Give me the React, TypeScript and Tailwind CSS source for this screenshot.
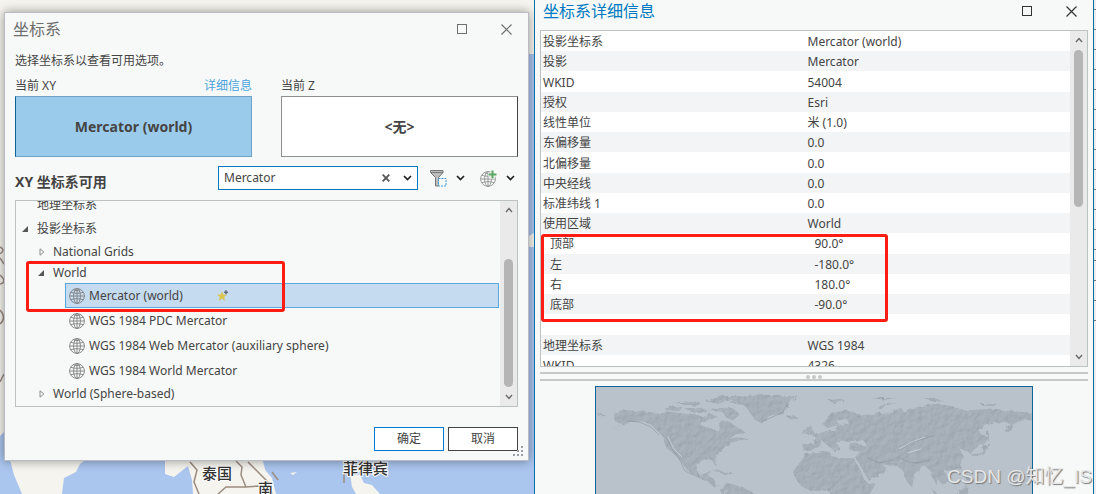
import React from 'react';

interface DetailRow {
  label: string;
  value: string;
  indent?: boolean;
}

const details: DetailRow[] = [
  { label: '投影坐标系', value: 'Mercator (world)' },
  { label: '投影', value: 'Mercator' },
  { label: 'WKID', value: '54004' },
  { label: '授权', value: 'Esri' },
  { label: '线性单位', value: '米 (1.0)' },
  { label: '东偏移量', value: '0.0' },
  { label: '北偏移量', value: '0.0' },
  { label: '中央经线', value: '0.0' },
  { label: '标准纬线 1', value: '0.0' },
  { label: '使用区域', value: 'World' },
  { label: '顶部', value: '90.0°', indent: true },
  { label: '左', value: '-180.0°', indent: true },
  { label: '右', value: '180.0°', indent: true },
  { label: '底部', value: '-90.0°', indent: true },
  { label: '', value: '' },
  { label: '地理坐标系', value: 'WGS 1984' },
  { label: 'WKID', value: '4326' },
];

const systems = [
  'Mercator (world)',
  'WGS 1984 PDC Mercator',
  'WGS 1984 Web Mercator (auxiliary sphere)',
  'WGS 1984 World Mercator',
];

const GlobeLines = () => (
  <g fill="none" stroke="#808080" strokeWidth=".9">
    <circle cx="8" cy="8" r="7.4" />
    <ellipse cx="8" cy="8" rx="3.4" ry="7.4" />
    <path d="M8 .6v14.8M.6 8h14.8M1.8 4.3c3.6 1.3 8.8 1.3 12.4 0M1.8 11.7c3.6-1.3 8.8-1.3 12.4 0M4.5 1.8c2 1 5 1 7 0" />
  </g>
);

const GlobeIcon = () => (
  <svg className="h-4 w-4 shrink-0" viewBox="0 0 16 16">
    <GlobeLines />
  </svg>
);

const AddGlobeIcon = () => (
  <svg className="h-[17px] w-[17px]" viewBox="0 0 17 17">
    <g transform="translate(0 1)" opacity=".85">
      <GlobeLines />
    </g>
    <path d="M12.5 0v9M8 4.5h9" stroke="#f7f9f8" strokeWidth="4" />
    <path d="M12.5 .5v8M8.5 4.5h8" stroke="#5aa55f" strokeWidth="2" />
  </svg>
);

const FilterIcon = () => (
  <svg className="h-[17px] w-[17px]" viewBox="0 0 17 17">
    <path d="M.5 .5h12.500v2L8.500 7.500v8.500h-3V7.500L.5 2.500z" fill="#bdbdbd" stroke="#777" />
    <path d="M1 2.500h12" stroke="#777" />
    <rect x="8.500" y="8.500" width="7.500" height="7.500" fill="#f7f9f8" stroke="#3d9bd5" strokeDasharray="2 1" />
  </svg>
);

const StarIcon = () => (
  <svg className="h-3 w-3" viewBox="0 0 12 12">
    <path d="M5 1.200l1.300 3.300 3.700.2-2.900 2.300 1 3.700L5 8.700l-3.200 2 1-3.700L0 4.700l3.700-.2z" fill="#dcc650" />
    <path d="M9 .3v4M7 2.300h4" stroke="#68717c" strokeWidth="1.600" />
  </svg>
);

const Chevron = () => (
  <svg className="h-[6px] w-[9px]" viewBox="0 0 9 6">
    <path d="M1 1l3.500 3.500L8 1" fill="none" stroke="#222" strokeWidth="1.700" />
  </svg>
);

const OpenArrow = () => (
  <svg className="h-[6px] w-[6px]" viewBox="0 0 6 6">
    <path d="M6 0v6H0z" fill="#555" />
  </svg>
);

const ClosedArrow = () => (
  <svg className="h-2 w-[6px]" viewBox="0 0 6 8">
    <path d="M1 .8v6.400L4.800 4z" fill="none" stroke="#8a8a8a" />
  </svg>
);

const WindowButtons: React.FC<{ color: string }> = ({ color }) => (
  <div className="flex gap-[33px] pr-4">
    <button aria-label="最大化" className={color}>
      <svg className="h-[11px] w-[11px]" viewBox="0 0 11 11">
        <rect x=".5" y=".5" width="9" height="9" fill="none" stroke="currentColor" />
      </svg>
    </button>
    <button aria-label="关闭" className={color}>
      <svg className="h-[11px] w-[11px]" viewBox="0 0 11 11">
        <path d="M.5 .5l10 10M10.500 .5l-10 10" stroke="currentColor" strokeWidth="1.200" />
      </svg>
    </button>
  </div>
);

const ScrollBar: React.FC<{ thumb: string }> = ({ thumb }) => (
  <div className="flex w-[17px] shrink-0 flex-col items-center bg-[#eaeaea] py-[6px]">
    <svg className="h-[6px] w-2 shrink-0" viewBox="0 0 8 6">
      <path d="M1 5l3-3.500L7 5" fill="none" stroke="#666" strokeWidth="1.300" />
    </svg>
    <div className={`w-[9px] rounded-full bg-[#b5b5b5] ${thumb}`} />
    <svg className="mt-auto h-[6px] w-2 shrink-0" viewBox="0 0 8 6">
      <path d="M1 1l3 3.500L7 1" fill="none" stroke="#666" strokeWidth="1.300" />
    </svg>
  </div>
);

const BaseMap = () => (
  <svg className="absolute inset-0 h-full w-full" viewBox="0 0 1096 494" preserveAspectRatio="xMinYMin slice">
    <rect width="1096" height="494" fill="#f5f4ee" />
    <path d="M0 436L4 432V460H10L14 475L22 494H0z" fill="#aac5ee" />
    <path d="M62 494L64 478L76 472L80 464L88 458H165V474L174 477L188 466L192 480L193 494z" fill="#aac5ee" />
    <path d="M261 458H540V54H526V458zM262 458H534V494H272z" fill="#aac5ee" />
    <path d="M529 236L534 233V247H529z" fill="#f5f4ee" />
    <path d="M265 470L272 478L276 494H262zM350 474L360 475L364 483L372 485L380 494H356L352 487zM290 473l7-1-4 3z" fill="#f5f4ee" />
    <g fill="none" stroke="#9c8c80" strokeWidth="1.500">
      <path d="M190 462l7 8-3 12 5 12M218 494l8-7h20l-5-12 1-8-6-6M246 487l12-1 6 4M248 462l12 12 10 10 2 10" />
      <path d="M0 247q6 3 0 7M0 258l4 6M0 275q8 7 0 9M0 310q7 8 0 14M0 382l4-8M344 474v9M272 472l6 8" />
    </g>
    <g className="font-['Noto_Sans_CJK_SC',sans-serif] text-[15px] font-medium" fill="#333" stroke="#fff" strokeWidth="2" paintOrder="stroke">
      <text x="202" y="479">泰国</text>
      <text x="258" y="494">南</text>
      <text x="343" y="474">菲律宾</text>
    </g>
  </svg>
);

const WorldPreview = () => (
  <svg className="block w-full" viewBox="0 0 437 218">
    <defs>
      {/* rough coast plus shaded relief over the land */}
      <filter id="relief" x="0" y="0" width="100%" height="100%" colorInterpolationFilters="sRGB">
        <feTurbulence type="fractalNoise" baseFrequency=".16" numOctaves="4" seed="7" result="noise" />
        <feDisplacementMap in="SourceGraphic" in2="noise" scale="4" result="land" />
        <feDiffuseLighting in="noise" surfaceScale="1.200" lightingColor="#ffffff" result="light">
          <feDistantLight azimuth="225" elevation="60" />
        </feDiffuseLighting>
        <feComposite in="light" in2="land" operator="in" result="shade" />
        <feComposite in="land" in2="shade" operator="arithmetic" k1=".25" k2=".79" />
      </filter>
    </defs>
    <rect width="437" height="218" fill="#b9c2ca" />
    <g filter="url(#relief)" fill="#a5aeb6">
      <rect width="437" height="218" fill="none" />
      <g transform="translate(-60 -16) scale(.3333)">
        <path d="M232 125L262 117L330 122L375 128L400 122L440 128L475 130L500 140L520 128L545 135L530 145L497 152L493 162L520 172L540 178L545 188L552 175L550 158L560 148L580 155L600 165L630 185L600 190L580 205L600 200L640 202L605 210L585 215L565 230L545 250L538 265L543 285L537 282L530 268L505 266L485 275L482 295L490 312L505 310L515 300L525 302L520 318L535 325L540 345L555 345L535 350L515 330L480 318L455 300L440 275L415 250L388 228L383 200L365 180L345 160L315 152L285 152L225 182L265 160L240 155L235 145z" />
        <path d="M380 112L400 105L440 108L430 120L395 118zM420 98L470 92L500 98L480 104zM445 112L500 110L520 120L480 128zM505 90L560 76L640 74L600 84L545 98zM550 108L590 112L612 130L590 150L570 138L560 122L520 118z" />
        <path d="M580 96L600 82L650 73L720 72L790 78L765 90L755 110L740 125L700 135L678 157L655 145L640 120L625 102L590 98z" />
        <path d="M560 390L556 360L572 336L590 340L620 350L650 365L660 400zM525 295L545 297L570 306L595 308L570 312zM750 138L768 133L788 140L768 146zM812 166L824 163L838 190L812 192zM802 178L812 176L810 188L800 188zM183 125L212 135L188 136z" />
      </g>
      <g transform="translate(225 -16) scale(.3333)">
        <path d="M5 158L40 125L75 118L105 125L85 140L70 140L50 150L55 162L30 168L20 172z" />
        <path d="M-52 220L-22 220L-15 200L-25 192L0 182L40 180L50 165L85 158L80 145L60 145L75 130L100 128L130 132L150 130L175 125L215 125L240 108L250 125L290 108L340 98L395 105L440 118L500 115L560 120L636 125V148L600 148L578 160L562 188L553 180L570 155L530 155L490 165L475 175L480 190L500 195L495 215L460 235L450 250L440 240L420 235L430 260L420 290L395 300L370 300L385 325L370 345L355 330L345 320L350 345L335 320L330 300L315 285L300 290L280 310L275 350L258 330L248 300L230 285L185 280L160 260L200 295L190 305L145 330L128 300L105 260L115 240L85 235L90 215L140 225L130 210L75 210L45 215L60 235L45 245L30 230L5 210L-10 225L-30 240L-52 240z" />
        <path d="M-45 250L-25 248L25 242L30 255L65 262L100 262L120 300L130 325L145 340L168 335L140 380L140 420L30 420L25 360L-30 360L-60 345L-80 315L-78 295L-55 265z" />
        <path d="M492 222L515 218L500 228L494 244L460 260L456 252L485 240zM500 180L505 180L506 210L500 210zM405 372L440 345L445 372L430 385zM330 348L370 390L350 385zM440 310L450 315L452 340L440 328zM175 115L190 100L235 95L200 102L185 118zM20 88L60 84L75 88L40 96zM150 81L230 82L190 86zM310 82L340 80L370 92L340 90zM480 100L530 98L520 106L490 105z" />
      </g>
    </g>
    <g fill="none" stroke="#858e98" strokeWidth="1" opacity=".5">
      <path d="M31 34l12 1 12 5 8 8M70 50l6 12 7 9 6 13 8 4M166 35l6-3 14-6 6-8" />
      <path d="M302 64l6-3 8-6 12-3 12-4M304 71l9 4 10 1 12-3M272 71l12 5 14-3" />
    </g>
    <path d="M72 50l6 12 8 8M304 62l12-7 14-5M312 66l14-4M131 103l-4 6" fill="none" stroke="#d4d9dd" strokeWidth="1" opacity=".7" />
  </svg>
);

const CoordinateDialog = () => (
  <section className="relative border border-[#b9bcc4] bg-[#f7f9f8] px-[10px] pb-[9px] shadow-[0_0_10px_rgba(0,0,0,0.4)]">
    <header className="-mx-[10px] flex h-8 items-center justify-between pl-2">
      <h1 className="text-base text-[#6e6e6e]">坐标系</h1>
      <WindowButtons color="text-[#6e6e6e]" />
    </header>
    <p className="h-[30px] leading-8">选择坐标系以查看可用选项。</p>

    <div className="flex gap-[29px]">
      <div className="flex-1">
        <div className="flex h-[21px] items-center justify-between">
          <span>当前 XY</span>
          <a href="#details" className="text-[#4ba3dc]">详细信息</a>
        </div>
        <button className="h-[61px] w-full border border-[#6fa3c7] border-l-[#0b6094] bg-[#9bcbeb] text-sm font-bold">
          Mercator (world)
        </button>
      </div>
      <div className="flex-1">
        <div className="flex h-[21px] items-center">当前 Z</div>
        <button className="h-[61px] w-full border border-[#8f8f8f] border-r-[#444] bg-white text-sm font-bold">
          &lt;无&gt;
        </button>
      </div>
    </div>

    <div className="mt-[9px] flex h-6 items-center">
      <h2 className="mt-2 text-sm font-bold">XY 坐标系可用</h2>
      <div className="ml-auto flex h-6 w-[200px] items-center border border-[#0079c1] bg-white pr-[5px]">
        <input aria-label="搜索" defaultValue="Mercator" className="w-0 flex-1 bg-transparent pl-[5px] outline-none" />
        <button aria-label="清除" className="mr-[13px]">
          <svg className="h-2 w-2" viewBox="0 0 8 8">
            <path d="M.7 .7l6.600 6.600M7.300 .7L.7 7.300" stroke="#555" strokeWidth="1.800" />
          </svg>
        </button>
        <button aria-label="搜索历史"><Chevron /></button>
      </div>
      <button aria-label="过滤器" className="ml-3 flex items-center gap-[9px]">
        <FilterIcon />
        <Chevron />
      </button>
      <button aria-label="添加坐标系" className="mr-[3px] ml-[15px] flex items-center gap-[9px]">
        <AddGlobeIcon />
        <Chevron />
      </button>
    </div>

    <div className="relative mt-[10px] flex h-[207px] overflow-hidden border border-[#bcc1c1]">
      <ul className="-mt-2 min-w-0 flex-1 pr-px">
        <li className="flex h-6 items-center pl-[21px]">地理坐标系</li>
        <li className="flex h-6 items-center gap-[9px] pl-[6px]"><OpenArrow />投影坐标系</li>
        <li className="flex h-[21px] items-center gap-2 pl-[23px]"><ClosedArrow />National Grids</li>
        <li className="flex h-[21px] items-center gap-[9px] pl-[22px]"><OpenArrow />World</li>
        {systems.map((name, i) => (
          <li
            key={name}
            className={`ml-[49px] flex h-[25px] items-center gap-1 border pl-[3px] ${i === 0 ? 'border-[#5ba7dc] bg-[#c5dbef]' : 'border-transparent'}`}
          >
            <GlobeIcon />
            {name}
            {i === 0 && <span className="ml-[30px]"><StarIcon /></span>}
          </li>
        ))}
        <li className="flex h-[21px] items-center gap-2 pl-[23px]"><ClosedArrow />World (Sphere-based)</li>
      </ul>
      <ScrollBar thumb="mt-[46px] h-[128px]" />
      <div className="absolute top-[60px] left-[10px] h-[51px] w-[259px] rounded-[3px] border-[3px] border-[#ff1c12]" />
    </div>

    <div className="mt-5 flex justify-end gap-1">
      <button className="h-6 w-[70px] border border-[#0078d4] bg-white">确定</button>
      <button className="h-6 w-[70px] border border-[#444] bg-white">取消</button>
    </div>
    <svg className="absolute right-1 bottom-[3px] h-[11px] w-[11px]" viewBox="0 0 11 11" fill="#9a9da3">
      <path d="M8 0h2v2h-2zM4 4h2v2h-2zM8 4h2v2h-2zM0 8h2v2h-2zM4 8h2v2h-2zM8 8h2v2h-2z" />
    </svg>
  </section>
);

const DetailsWindow = () => (
  <section className="relative flex h-full min-w-0 flex-col border-x border-[#0b6ea8] bg-[#f7f9f8] px-[5px]">
    <header className="-mr-[5px] mb-2 flex h-[22px] items-center justify-between pl-[3px]">
      <h1 className="text-base text-[#0079c1]">坐标系详细信息</h1>
      <WindowButtons color="text-[#333]" />
    </header>

    <div className="relative flex h-[337px] shrink-0 overflow-hidden border border-[#bcc1c1] bg-white">
      <div className="min-w-0 flex-1">
        <table className="h-[344px] w-full table-fixed border-collapse text-left">
          <tbody>
            {details.map((row, i) => (
              <tr key={i} className="h-5 even:bg-[#f3f4f6]">
                <th scope="row" className={`pt-[2px] pb-0 font-normal leading-4 ${row.indent ? 'pl-[9px]' : 'pl-[2px]'}`}>{row.label}</th>
                <td className={`pt-[2px] pb-0 leading-4 ${row.indent ? 'pl-[9px]' : 'pl-[2px]'}`}>{row.value}</td>
              </tr>
            ))}
          </tbody>
        </table>
      </div>
      <ScrollBar thumb="mt-[7px] h-[157px]" />
      <div className="absolute top-[203px] left-0 h-[88px] w-[347px] rounded-[3px] border-[3px] border-[#ff1c12]" />
    </div>

    <div className="mt-[5px] flex h-[9px] shrink-0 items-center justify-center gap-[2px] border-y-2 border-[#c8c8c8]">
      <span className="h-1 w-1 rounded-full bg-[#c8c8c8]" />
      <span className="h-1 w-1 rounded-full bg-[#c8c8c8]" />
      <span className="h-1 w-1 rounded-full bg-[#c8c8c8]" />
    </div>

    <div className="mt-[5px] min-h-0 flex-1 overflow-hidden">
      <div className="mx-auto w-4/5 border border-[#0b6699]">
        <WorldPreview />
      </div>
    </div>
  </section>
);

const lineRows = Array.from({ length: 17 }, (_, i) => i);

const App: React.FC = () => {
  return (
    <main className="relative grid h-screen grid-cols-[534fr_560fr_2px] overflow-hidden bg-[#f5f4ee] font-['Noto_Sans','Noto_Sans_CJK_SC',sans-serif] text-xs text-[#444]">
      <BaseMap />
      <div className="relative min-w-0 pt-3 pr-[5px] pl-1">
        <CoordinateDialog />
      </div>
      <DetailsWindow />
      <div className="relative bg-[#ececec] pt-[9px]">
        {lineRows.map((n) => (
          <div key={n} className={`border-t border-[#777] ${n === 12 ? 'h-[11px]' : 'h-5'}`} />
        ))}
      </div>
      <div className="absolute right-1 bottom-[3px] font-['Liberation_Sans','Noto_Sans_CJK_SC',sans-serif] text-[19px] leading-7 text-[#e4e6e8] [text-shadow:1px_1px_1px_#777]">
        CSDN @知忆_IS
      </div>
    </main>
  );
};

export default App;
